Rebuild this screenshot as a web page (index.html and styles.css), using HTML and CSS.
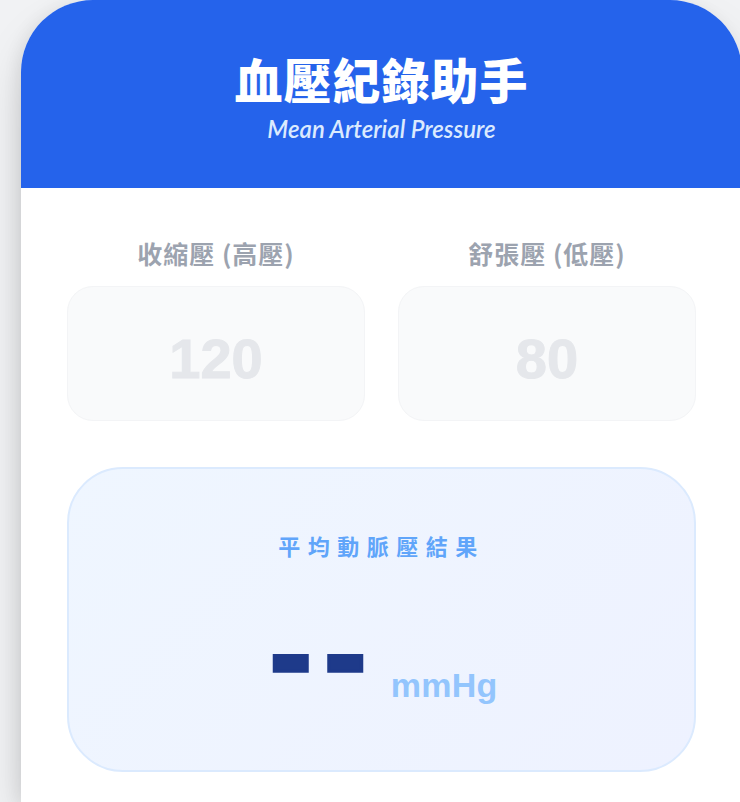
FILE: index.html
```html
<!DOCTYPE html>
<html lang="zh-Hant">
<head>
<meta charset="utf-8">
<title>血壓紀錄助手</title>
<link rel="stylesheet" href="styles.css">
</head>
<body>
<main class="card">
  <header class="hero">
    <h1 class="hero-title">血壓紀錄助手</h1>
    <p class="hero-sub">Mean Arterial Pressure</p>
  </header>
  <section class="body">
    <div class="inputs">
      <div class="field">
        <div class="field-label">收縮壓 (高壓)</div>
        <div class="field-box">120</div>
      </div>
      <div class="field">
        <div class="field-label">舒張壓 (低壓)</div>
        <div class="field-box">80</div>
      </div>
    </div>
    <div class="result">
      <div class="result-title">平均動脈壓結果</div>
      <div class="result-value">
        <span class="value-num">--</span>
        <span class="value-unit">mmHg</span>
      </div>
    </div>
  </section>
</main>
</body>
</html>
```
FILE: styles.css
```css
html, body {
  margin: 0;
  padding: 0;
}
body {
  background: #f1f2f4;
  width: 740px;
  height: 802px;
  overflow: hidden;
  font-family: "Noto Sans CJK TC", "Liberation Sans", sans-serif;
}
.card {
  margin-left: 21px;
  width: 721px;
  height: 802px;
  background: #ffffff;
  border-radius: 72px 72px 0 0;
  overflow: hidden;
  box-shadow: 0 25px 50px -12px rgba(0, 0, 0, 0.25), -4px 0 16px rgba(0, 0, 0, 0.06);
}
.hero {
  background: #2563eb;
  height: 188px;
  box-sizing: border-box;
  padding-top: 47px;
  text-align: center;
}
.hero-title {
  margin: 0;
  color: #ffffff;
  font-family: "Noto Sans CJK TC", sans-serif;
  font-weight: 900;
  font-size: 48px;
  line-height: 62px;
  letter-spacing: 1px;
}
.hero-sub {
  margin: 6px 0 0;
  color: #dbeafe;
  font-family: Lato, "Open Sans", sans-serif;
  font-style: italic;
  font-weight: 600;
  font-size: 24px;
  line-height: 28px;
}
.body {
  padding: 46px;
}
.inputs {
  display: grid;
  grid-template-columns: 1fr 1fr;
  gap: 33px;
}
.field {
  display: flex;
  flex-direction: column;
}
.field-label {
  text-align: center;
  color: #9ca3af;
  font-weight: 700;
  font-size: 25px;
  line-height: 38px;
  letter-spacing: 1px;
  margin-bottom: 14px;
}
.field-box {
  height: 135px;
  box-sizing: border-box;
  padding-top: 44px;
  background: #f9fafb;
  border: 1px solid #f3f4f6;
  border-radius: 26px;
  text-align: center;
  color: #e5e7eb;
  font-family: "Liberation Sans", Arial, sans-serif;
  font-weight: 700;
  font-size: 56px;
  line-height: 1;
  -webkit-text-stroke: 1px #e5e7eb;
}
.result {
  margin-top: 46px;
  height: 305px;
  box-sizing: border-box;
  padding-top: 62px;
  border: 2px solid #dbeafe;
  border-radius: 56px;
  background: linear-gradient(135deg, #eff6ff 0%, #eef2ff 100%);
  text-align: center;
}
.result-title {
  color: #60a5fa;
  font-weight: 700;
  font-size: 22px;
  line-height: 28px;
  letter-spacing: 7.5px;
}
.result-value {
  margin-top: 30px;
  padding-left: 4px;
  display: flex;
  justify-content: center;
  align-items: baseline;
  gap: 12px;
}
.value-num {
  color: #1e3a8a;
  font-family: "Liberation Sans", Arial, sans-serif;
  font-weight: 700;
  font-size: 128px;
  line-height: 1;
  letter-spacing: 12px;
  -webkit-text-stroke: 3.5px #1e3a8a;
}
.value-unit {
  color: #93c5fd;
  font-family: "Liberation Sans", Arial, sans-serif;
  font-weight: 700;
  font-size: 34px;
  letter-spacing: 0.3px;
}
```
